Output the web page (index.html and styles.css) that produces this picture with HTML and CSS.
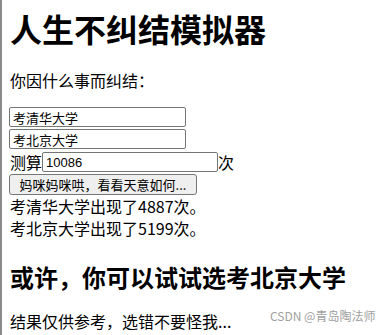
FILE: index.html
```html
<!DOCTYPE html>
<html>
<head>
	<meta http-equiv="Content-Type" content="text/html; charset=utf-8" />
	<title>人生不纠结模拟器</title>
	<link rel="stylesheet" href="styles.css">
</head>
<body>
	<div class="pagina">
		<h1 class="titulo">人生不纠结模拟器</h1>
		<p class="pregunta">你因什么事而纠结：</p>

		<div class="formulario">
			<input type="text" class="opcion" value="考清华大学">
			<input type="text" class="opcion" value="考北京大学">
			<div class="fila_veces">测算<input type="text" class="veces" value="10086">次</div>
			<button class="boton">妈咪妈咪哄，看看天意如何...</button>
		</div>

		<div class="resultado">
			<div class="linea">考清华大学出现了4887次。</div>
			<div class="linea">考北京大学出现了5199次。</div>
		</div>

		<h2 class="consejo">或许，你可以试试选考北京大学</h2>
		<p class="nota">结果仅供参考，选错不要怪我...</p>
	</div>
	<span class="marca">CSDN @青岛陶法师</span>
</body>
</html>
```

FILE: styles.css
```css
body {
	margin: 0;
	font-family: "Noto Sans CJK SC", "Liberation Sans", sans-serif;
	color: #000000;
	background-color: #ffffff;
}

.pagina {
	border-left: 2px solid #8a8a8a;
	padding: 8px 8px 0 8px;
	min-height: 327px;
}

.titulo {
	margin: 0;
	font-size: 32px;
	line-height: 40px;
	font-weight: bold;
}

.pregunta {
	margin: 22px 0 0 0;
	font-size: 16px;
	line-height: 20px;
}

.formulario {
	margin-top: 17px;
	display: flex;
	flex-direction: column;
	align-items: flex-start;
	gap: 2px;
}

.opcion, .veces {
	box-sizing: border-box;
	height: 20px;
	width: 177px;
	margin: 0;
	padding: 0 3px;
	border: 1px solid #767676;
	border-radius: 2px;
	font-family: "Liberation Sans", "Noto Sans CJK SC", sans-serif;
	font-size: 13px;
	line-height: 18px;
	color: #000000;
}

.opcion {
	margin-left: -1px;
}

.fila_veces {
	display: flex;
	align-items: center;
	margin-top: 1px;
	font-size: 16px;
	line-height: 20px;
}

.veces {
	width: 176px;
}

.boton {
	box-sizing: border-box;
	margin: 0 0 0 -1px;
	height: 21px;
	width: 188px;
	padding: 0 6px;
	border: 1px solid #767676;
	border-radius: 3px;
	background-color: #efefef;
	font-family: "Noto Sans CJK SC", sans-serif;
	font-size: 13px;
	line-height: 19px;
	color: #000000;
}

.resultado {
	font-size: 16px;
	line-height: 22px;
}

.consejo {
	margin: 23px 0 0 0;
	font-size: 24px;
	line-height: 30px;
	font-weight: bold;
}

.nota {
	margin: 18px 0 0 0;
	font-size: 16px;
	line-height: 22px;
}

.marca {
	position: absolute;
	left: 270px;
	top: 308px;
	font-size: 12px;
	line-height: 16px;
	color: #a0a0a0;
	font-family: "Noto Sans CJK SC", sans-serif;
}
```
